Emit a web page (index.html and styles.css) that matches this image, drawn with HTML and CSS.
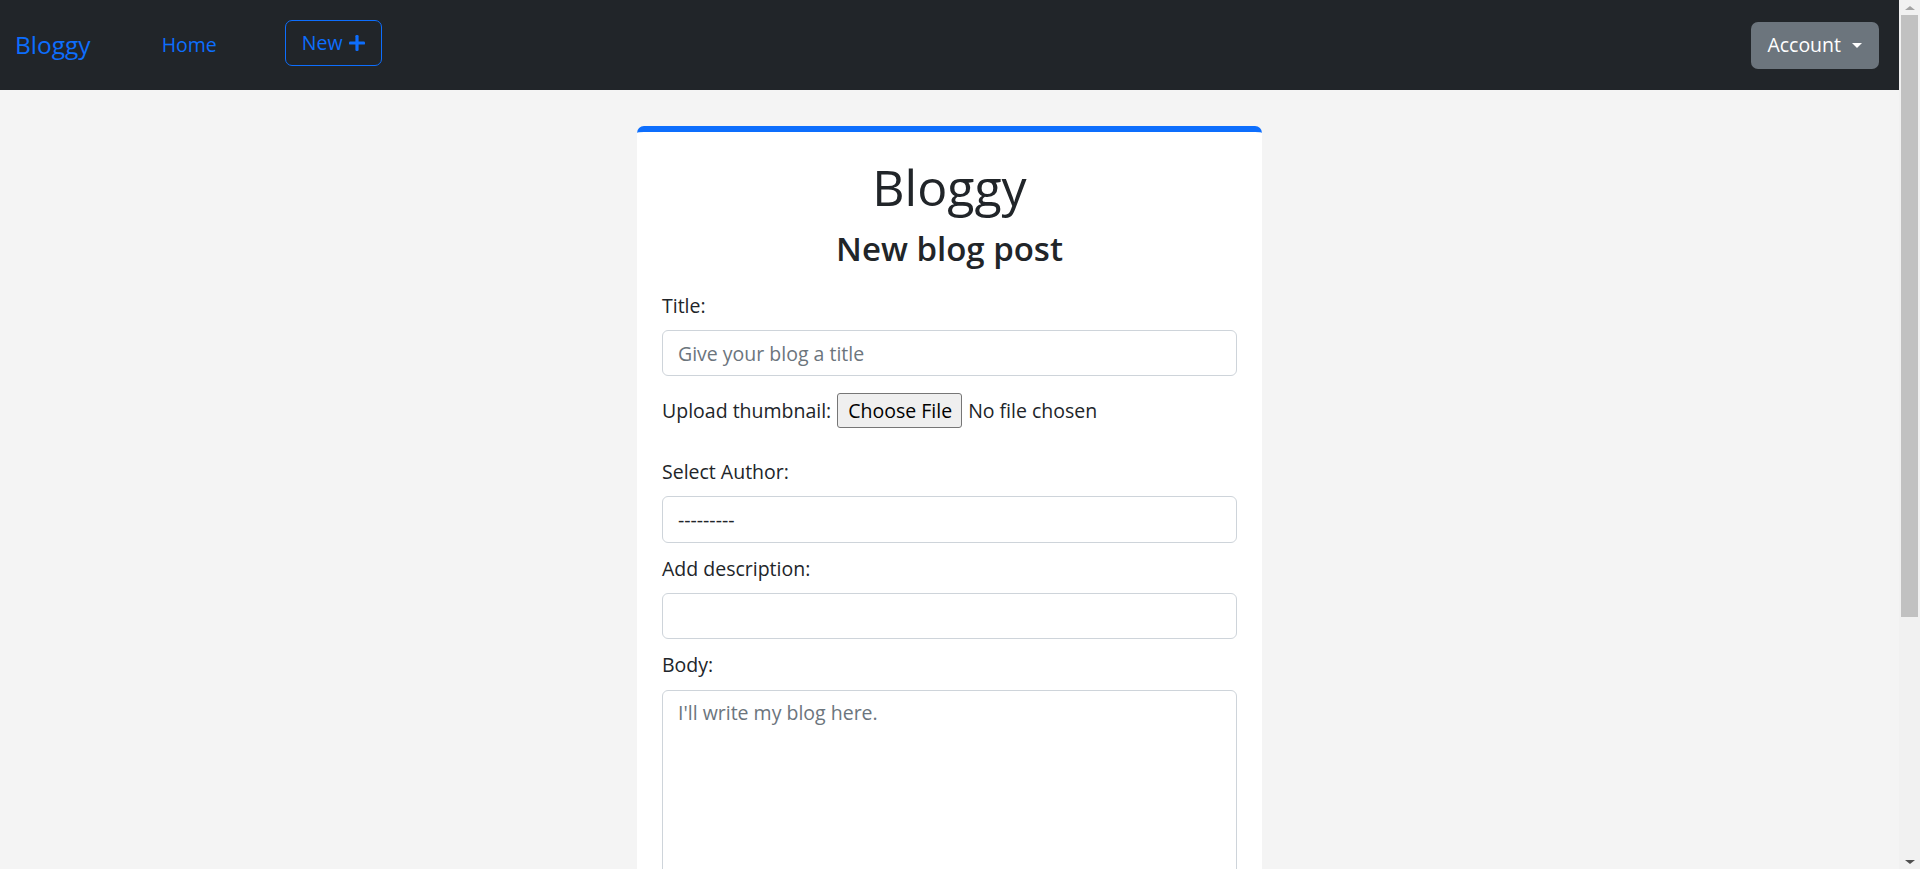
FILE: index.html
```html
<!DOCTYPE html>
<html lang="en">
<head>
<meta charset="utf-8">
<title>Bloggy - New blog post</title>
<link rel="stylesheet" href="styles.css">
</head>
<body>
<div class="window">
  <div class="viewport">
    <nav class="navbar">
      <a class="brand" href="#">Bloggy</a>
      <a class="nav-link" href="#">Home</a>
      <a class="btn-new" href="#">New
        <svg class="plus-icon" width="16" height="16" viewBox="0 0 16 16" aria-hidden="true">
          <rect x="6.4" y="0" width="3.2" height="16" rx="1.2" fill="currentColor"/>
          <rect x="0" y="6.4" width="16" height="3.2" rx="1.2" fill="currentColor"/>
        </svg>
      </a>
      <button class="btn-account" type="button">Account <span class="caret"></span></button>
    </nav>
    <main class="page">
      <section class="card">
        <h1 class="card-title">Bloggy</h1>
        <h3 class="card-subtitle">New blog post</h3>
        <form class="post-form">
          <label class="form-label" for="title">Title:</label>
          <input class="field" id="title" type="text" placeholder="Give your blog a title">
          <div class="upload-row">
            <span>Upload thumbnail:</span>
            <button type="button" class="file-btn">Choose File</button>
            <span>No file chosen</span>
          </div>
          <label class="form-label" for="author">Select Author:</label>
          <select class="field select" id="author"><option>---------</option></select>
          <label class="form-label" for="desc">Add description:</label>
          <input class="field" id="desc" type="text">
          <label class="form-label" for="body">Body:</label>
          <textarea class="field textarea" id="body" placeholder="I'll write my blog here."></textarea>
        </form>
      </section>
    </main>
  </div>
  <div class="scrollbar" aria-hidden="true">
    <div class="sb-arrow"><span class="tri-up"></span></div>
    <div class="sb-track"><div class="sb-thumb"></div></div>
    <div class="sb-arrow"><span class="tri-down"></span></div>
  </div>
</div>
</body>
</html>
```
FILE: styles.css
```css
html,
body {
  height: 100%;
}

body {
  margin: 0;
  background: #f4f4f4;
  font-family: "Open Sans", "Noto Sans", sans-serif;
  font-size: 19.5px;
  line-height: 1.5;
  color: #212529;
}

/* ---------- window + scrollbar ---------- */
.window {
  display: flex;
  height: 100vh;
  overflow: hidden;
}
.viewport {
  flex: 1;
  min-width: 0;
  overflow: hidden;
}
.scrollbar {
  width: 21px;
  flex: none;
  display: flex;
  flex-direction: column;
  background: #f1f1f1;
}
.sb-arrow {
  height: 15px;
  display: flex;
  align-items: center;
  justify-content: center;
}
.tri-up {
  width: 0;
  height: 0;
  border-bottom: 4px solid #a3a3a3;
  border-left: 5px solid transparent;
  border-right: 5px solid transparent;
}
.tri-down {
  width: 0;
  height: 0;
  border-top: 4px solid #505050;
  border-left: 5px solid transparent;
  border-right: 5px solid transparent;
}
.sb-track {
  flex: 1;
  padding: 0 2px;
}
.sb-thumb {
  height: 602px;
  background: #c1c1c1;
}

/* ---------- navbar ---------- */
.navbar {
  display: flex;
  align-items: center;
  height: 90px;
  box-sizing: border-box;
  padding: 0 20px 0 15px;
  background: #212529;
}
.brand {
  font-size: 24.5px;
  color: #0d6efd;
  text-decoration: none;
  margin-right: 71px;
}
.nav-link {
  color: #0d6efd;
  text-decoration: none;
  margin-right: 68px;
}
.btn-new {
  display: inline-flex;
  align-items: center;
  gap: 6px;
  height: 46px;
  box-sizing: border-box;
  padding: 0 16px;
  margin-bottom: 4px;
  border: 1px solid #0d6efd;
  border-radius: 7px;
  color: #0d6efd;
  text-decoration: none;
}
.plus-icon {
  display: block;
}
.btn-account {
  margin-left: auto;
  display: inline-flex;
  align-items: center;
  gap: 11px;
  height: 47px;
  padding: 0 17px 0 16px;
  background: #6c757d;
  color: #fff;
  border: 0;
  border-radius: 7px;
  font: inherit;
}
.caret {
  width: 0;
  height: 0;
  border-top: 5px solid #fff;
  border-left: 5px solid transparent;
  border-right: 5px solid transparent;
}

/* ---------- card ---------- */
.page {
  padding: 36px 0 52px;
}
.card {
  width: 625px;
  margin: 0 auto;
  box-sizing: border-box;
  padding: 25px;
  background: #fff;
  border-top: 6px solid #0d6efd;
  border-radius: 7px;
}
.card-title {
  margin: 0 0 12px;
  font-size: 50px;
  font-weight: 400;
  line-height: 1.2;
  text-align: center;
}
.card-subtitle {
  margin: 0 0 22px;
  font-size: 33px;
  font-weight: 600;
  line-height: 1.2;
  text-align: center;
}

/* ---------- form ---------- */
.post-form {
  display: flex;
  flex-direction: column;
}
.form-label {
  margin-bottom: 10px;
}
.field {
  display: block;
  box-sizing: border-box;
  width: 100%;
  height: 46.5px;
  margin: 0 0 11px;
  padding: 7.5px 15px;
  font: inherit;
  color: #212529;
  background: #fff;
  border: 1px solid #ced4da;
  border-radius: 6px;
}
.field::placeholder {
  color: #6c757d;
}
.select {
  appearance: none;
  -webkit-appearance: none;
}
.textarea {
  height: 420px;
  resize: vertical;
}
.upload-row {
  display: flex;
  align-items: center;
  gap: 6px;
  height: 46.5px;
  margin: 0 0 23px;
}
.file-btn {
  height: 35px;
  padding: 0 9px 0 10px;
  font: inherit;
  color: #000;
  background: #efefef;
  border: 1px solid #767676;
  border-radius: 3px;
}
```
